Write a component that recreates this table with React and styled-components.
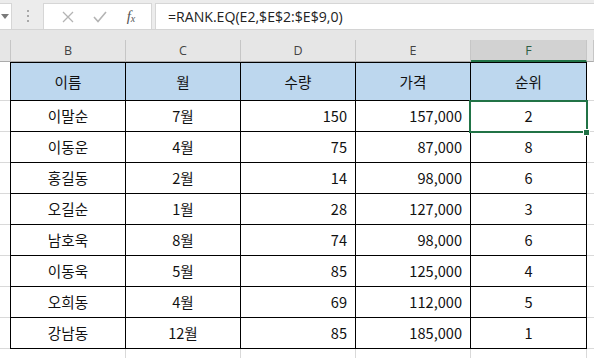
import React from "react";
import styled, { createGlobalStyle, css } from "styled-components";

// --- DATA ---
const columns = [
  { id: "B", w: 115, align: "center" },
  { id: "C", w: 115, align: "center" },
  { id: "D", w: 115, align: "right" },
  { id: "E", w: 115, align: "right" },
  { id: "F", w: 116, align: "center" },
];

const headers = ["이름", "월", "수량", "가격", "순위"];

const rows = [
  ["이말순", "7월", "150", "157,000", "2"],
  ["이동운", "4월", "75", "87,000", "8"],
  ["홍길동", "2월", "14", "98,000", "6"],
  ["오길순", "1월", "28", "127,000", "3"],
  ["남호욱", "8월", "74", "98,000", "6"],
  ["이동욱", "5월", "85", "125,000", "4"],
  ["오희동", "4월", "69", "112,000", "5"],
  ["강남동", "12월", "85", "185,000", "1"],
];

// --- COMPONENT ---
const App = () => (
  <>
    <GlobalStyle />
    <Sheet>
      <FormulaBar>
        <NameBox>
          <svg width="8" height="5" viewBox="0 0 8 5">
            <path d="M0 0 L8 0 L4 5 Z" fill="#7a7a7a" />
          </svg>
        </NameBox>
        <Grip>
          <span />
          <span />
          <span />
        </Grip>
        <FxBox>
          <svg width="12" height="12" viewBox="0 0 12 12">
            <path d="M1 1 L11 11 M11 1 L1 11" stroke="#b4b4b4" strokeWidth="1.3" />
          </svg>
          <svg width="14" height="12" viewBox="0 0 14 12">
            <path d="M1 6 L5 10.5 L13 1" stroke="#b4b4b4" strokeWidth="1.6" fill="none" />
          </svg>
          <Fx>
            f<sub>x</sub>
          </Fx>
        </FxBox>
        <FormulaInput>=RANK.EQ(E2,$E$2:$E$9,0)</FormulaInput>
      </FormulaBar>
      <Gap />

      <HeaderRow>
        <ColHead $w={11} />
        {columns.map((c) => (
          <ColHead key={c.id} $w={c.w} $sel={c.id === "F"}>
            {c.id}
          </ColHead>
        ))}
        <ColHead $grow />
      </HeaderRow>

      <Row $h={39}>
        <Sliver />
        {headers.map((h, i) => (
          <Cell key={h} $w={columns[i].w} $first={i === 0} $top $head align="center">
            {h}
          </Cell>
        ))}
        <Tail />
      </Row>

      {rows.map((r, ri) => (
        <Row key={ri} $h={31}>
          <Sliver />
          {r.map((v, i) => (
            <Cell
              key={i}
              $w={columns[i].w}
              $first={i === 0}
              $active={ri === 0 && i === 4}
              align={columns[i].align}
            >
              {v}
            </Cell>
          ))}
          <Tail />
        </Row>
      ))}

      <Row $h={31}>
        <Sliver />
        {columns.map((c) => (
          <EmptyCell key={c.id} $w={c.w} />
        ))}
        <Tail />
      </Row>
    </Sheet>
  </>
);

// --- STYLES ---
const GlobalStyle = createGlobalStyle`
  body {
    margin: 0;
    background: #fff;
    font-family: "Noto Sans CJK KR", "Noto Sans", sans-serif;
  }
`;

const Sheet = styled.div`
  width: 594px;
  height: 358px;
  overflow: hidden;
  background: #e6e6e6;
  display: flex;
  flex-direction: column;
`;

const FormulaBar = styled.div`
  flex: none;
  height: 30px;
  box-sizing: border-box;
  padding-top: 3px;
  display: flex;
  align-items: stretch;
  background: #ececec;
  border-bottom: 1px solid #d4d4d4;
`;

const box = css`
  background: #fff;
  box-sizing: border-box;
  border: 1px solid #d6d6d6;
  border-bottom: none;
`;

const NameBox = styled.div`
  ${box};
  border-left: none;
  width: 12px;
  display: flex;
  align-items: center;
  justify-content: flex-end;
  overflow: hidden;
  padding-right: 4px;
  svg {
    margin-right: -2px;
  }
`;

const Grip = styled.div`
  width: 31px;
  display: flex;
  flex-direction: column;
  align-items: center;
  justify-content: center;
  gap: 3px;
  span {
    width: 2px;
    height: 2px;
    background: #a8a8a8;
  }
`;

const FxBox = styled.div`
  ${box};
  width: 109px;
  display: flex;
  align-items: center;
  justify-content: space-around;
  padding: 0 6px 0 8px;
`;

const Fx = styled.span`
  font-family: "Liberation Serif", serif;
  font-style: italic;
  font-size: 15px;
  color: #555;
  sub {
    font-size: 10px;
    vertical-align: -1px;
  }
`;

const FormulaInput = styled.div`
  ${box};
  flex: 1;
  margin-left: 3px;
  border-right: none;
  padding-left: 12px;
  display: flex;
  align-items: center;
  font-family: "Open Sans", "Liberation Sans", sans-serif;
  font-size: 14.1px;
  color: #222;
`;

const Gap = styled.div`
  flex: none;
  height: 10px;
  background: #e6e6e6;
`;

const HeaderRow = styled.div`
  flex: none;
  display: flex;
  height: 22px;
`;

const ColHead = styled.div`
  box-sizing: border-box;
  width: ${({ $w }) => ($w ? `${$w}px` : "auto")};
  flex: ${({ $grow }) => ($grow ? 1 : "none")};
  border-right: 1px solid #c6c6c6;
  border-bottom: 1px solid #ababab;
  background: ${({ $sel }) => ($sel ? "#d2d2d2" : "#e6e6e6")};
  color: ${({ $sel }) => ($sel ? "#2f5f44" : "#444")};
  font-family: "Open Sans", "Liberation Sans", sans-serif;
  font-size: 12.5px;
  display: flex;
  align-items: center;
  justify-content: center;
  ${({ $sel }) =>
    $sel &&
    css`
      border-bottom: 2px solid #217346;
    `}
`;

const Row = styled.div`
  display: flex;
  height: ${({ $h }) => $h}px;
  flex: none;
  background: #fff;
`;

const Sliver = styled.div`
  width: 11px;
  flex: none;
  box-sizing: border-box;
  border-bottom: 1px solid #d9d9d9;
`;

const Tail = styled.div`
  flex: 1;
  box-sizing: border-box;
  border-bottom: 1px solid #d9d9d9;
`;

const Cell = styled.div`
  position: relative;
  box-sizing: border-box;
  width: ${({ $w }) => $w}px;
  flex: none;
  display: flex;
  align-items: center;
  justify-content: ${({ align }) =>
    align === "right" ? "flex-end" : "center"};
  padding: 0 8px 1px;
  border-right: 1px solid #000;
  border-bottom: 1px solid #000;
  border-left: ${({ $first }) => ($first ? "1px solid #000" : "none")};
  border-top: ${({ $top }) => ($top ? "1px solid #000" : "none")};
  background: ${({ $head }) => ($head ? "#bdd7ee" : "#fff")};
  font-size: 14.6px;
  color: #111;
  ${({ $first, $w }) => $first && css`width: ${$w + 1}px; margin-left: -1px;`}
  ${({ $active }) =>
    $active &&
    css`
      &::after {
        content: "";
        position: absolute;
        top: -1px;
        left: -2px;
        right: -2px;
        bottom: -2px;
        border: 2px solid #217346;
        z-index: 2;
      }
      &::before {
        content: "";
        position: absolute;
        right: -3px;
        bottom: -4px;
        width: 5px;
        height: 5px;
        background: #217346;
        box-shadow: 0 0 0 1px #fff;
        z-index: 3;
      }
    `}
`;

const EmptyCell = styled.div`
  box-sizing: border-box;
  width: ${({ $w }) => $w}px;
  flex: none;
  border-right: 1px solid #d9d9d9;
`;

export default App;
